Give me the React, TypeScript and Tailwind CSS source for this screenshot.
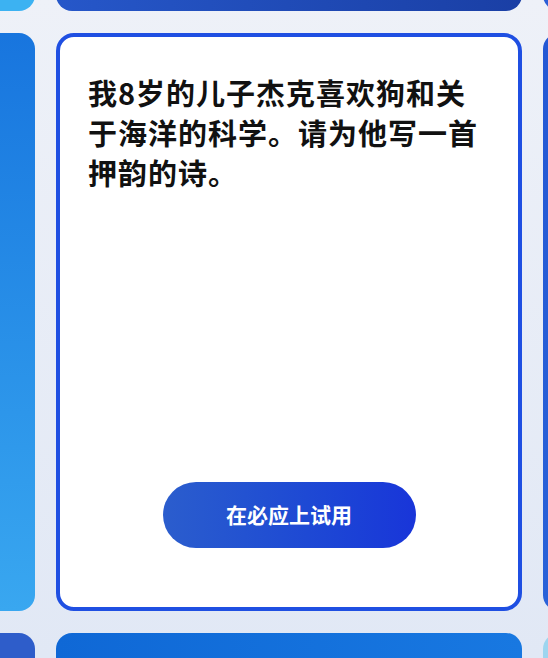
import React from "react";

export default function App() {
  const font = { fontFamily: '"Noto Sans CJK SC", "Noto Sans", sans-serif' };
  return (
    <div
      className="w-[548px] h-[658px] overflow-hidden bg-gradient-to-b from-[#eef1f8] to-[#e1e8f5]"
      style={font}
    >
      <div className="flex gap-[21px] ml-[-165px] mt-[-89px]">
        {/* left column */}
        <div className="flex flex-col gap-[22px] w-[200px] shrink-0">
          <div className="h-[100px] rounded-[16px] bg-[#3cb2f2]" />
          <div className="h-[578px] rounded-[16px] bg-gradient-to-b from-[#1875de] to-[#39a7f0]" />
          <div className="h-[100px] rounded-[16px] bg-[#2e5dca]" />
        </div>
        {/* main column */}
        <div className="flex flex-col gap-[22px] w-[466px] shrink-0">
          <div className="h-[100px] rounded-[16px] bg-gradient-to-r from-[#2657c9] to-[#1a3fa5]" />
          <div className="h-[578px] rounded-[18px] border-[4px] border-[#1f4fe2] bg-white flex flex-col items-center justify-between pt-[35px] pb-[59px] pl-[28px] pr-[24px]">
            <p className="w-full text-[29px] leading-[40px] font-bold text-[#111111] tracking-[1px]">
              我8岁的儿子杰克喜欢狗和关于海洋的科学。请为他写一首押韵的诗。
            </p>
            <button className="w-[253px] h-[66px] rounded-full bg-gradient-to-r from-[#2b5dcd] to-[#1935d9] text-white text-[21px] font-bold mr-[4px]">
              在必应上试用
            </button>
          </div>
          <div className="h-[100px] rounded-[16px] bg-gradient-to-r from-[#0f68d6] to-[#1878e1]" />
        </div>
        {/* right column */}
        <div className="flex flex-col gap-[22px] w-[200px] shrink-0">
          <div className="h-[100px] rounded-[16px] bg-[#2b5fd6]" />
          <div className="h-[578px] rounded-[16px] bg-gradient-to-b from-[#2458d4] to-[#2a62d8]" />
          <div className="h-[100px] rounded-[16px] bg-[#9dd5ef]" />
        </div>
      </div>
    </div>
  );
}
